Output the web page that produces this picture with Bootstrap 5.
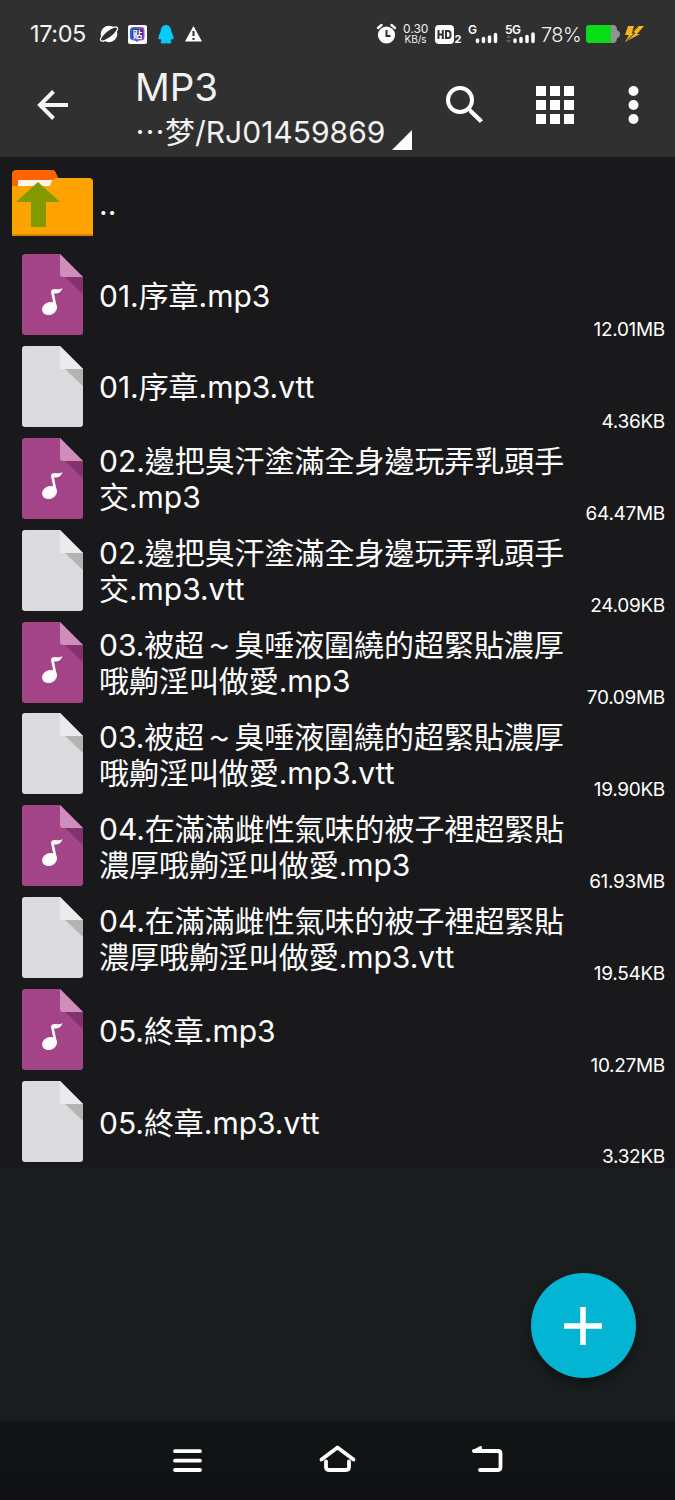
<!DOCTYPE html>
<html lang="zh-Hant">
<head>
<meta charset="utf-8">
<meta name="viewport" content="width=device-width, initial-scale=1">
<title>MP3</title>
<link href="https://cdn.jsdelivr.net/npm/bootstrap@5.3.0/dist/css/bootstrap.min.css" rel="stylesheet">
<style>
body{width:675px;height:1500px;overflow:hidden;background:#191d1e;color:#fff;font-family:Inter,"Noto Sans CJK TC",sans-serif}
svg{display:block;flex:none;overflow:visible}
.topbar{height:157px;background:#303030;color:#f2f2f2}
.statusbar{height:68px;padding-left:30px}
.clock{font-size:23.5px;line-height:24px;width:69px;white-space:nowrap;letter-spacing:-.4px}
.speed{font-size:12px;line-height:10.5px;width:25px;text-align:center;margin-left:7px;white-space:nowrap}
.pct{font-size:20px;line-height:24px;width:40px;white-space:nowrap;font-weight:300;letter-spacing:-.6px;padding-top:1px}
.toolbar{height:89px;padding-left:37px}
.heading{width:280px;margin-left:66px}
.heading-title{font-size:38.5px;line-height:38px;height:42px}
.heading-path{font-size:30px;line-height:44px;white-space:nowrap}
.files{background:#19191b;height:1011px}
.up-row{height:92px;padding-left:11px;font-size:30px}
.file-row{height:91.9px;padding:5px 10px 0 22px}
.file-name{width:480px;margin-left:16px;margin-top:2px;font-size:30px;line-height:36px;height:79px;white-space:nowrap;letter-spacing:-.04px}
.file-size{font-size:19px;line-height:22px;margin-bottom:-.5px;letter-spacing:-.3px}
.wave{display:inline-block;width:30px;text-align:center;font-size:19px;line-height:20px;vertical-align:2px;font-weight:700}
.fab{position:fixed;left:530.5px;top:1273px;width:105px;height:105px;background:#03b5d2;box-shadow:0 6px 10px rgba(0,0,0,.35)}
.navkeys{position:fixed;left:0;right:0;top:1421px;height:79px;background:linear-gradient(#101516,#111113)}
</style>
</head>
<body>
<svg width="0" height="0" class="position-absolute">
<symbol id="audio" viewBox="0 0 61 81"><path d="M3 0H38L61 23V78Q61 81 58 81H3Q0 81 0 78V3Q0 0 3 0Z" fill="#a34488"/><path d="M43 23H61V40Z" fill="#84326e"/><path d="M38 0L61 23H41Q38 23 38 20Z" fill="#cf8dbb"/><ellipse cx="27.500" cy="54.500" rx="7.700" ry="6.300" transform="rotate(-25 27.500 54.500)" fill="#fff"/><path d="M29 38Q29 35 33 35Q38 36 40.500 34Q39 40 32 39.500L35 54L32.500 55Z" fill="#fff"/></symbol>
<symbol id="plain" viewBox="0 0 61 81"><path d="M3 0H38L61 23V78Q61 81 58 81H3Q0 81 0 78V3Q0 0 3 0Z" fill="#dbdbdd"/><path d="M43 23H61V40Z" fill="#b3b3b4"/><path d="M38 0L61 23H38Z" fill="#ebebed"/></symbol>
</svg>
<header class="topbar">
  <div class="statusbar d-flex align-items-center">
    <div class="clock">17:05</div>
    <svg width="20" height="18" viewBox="0 0 20 18"><circle cx="10" cy="9" r="8.300" fill="#fff"/><ellipse cx="10" cy="9" rx="10.500" ry="3.600" transform="rotate(-38 10 9)" fill="#303030" stroke="#fff" stroke-width="1.200"/></svg>
    <svg style="margin-left:9px" width="19" height="19" viewBox="0 0 19 19"><defs><linearGradient id="pv"><stop stop-color="#2863e5"/><stop offset="1" stop-color="#b640ae"/></linearGradient></defs><rect width="19" height="19" rx="2" fill="#fff"/><path d="M6 2H13Q16.500 2 16.500 5V12Q16.500 15.500 13 15.500H11L9 17L7 15.500H5.500Q2 15 2 12V6Q2 2 6 2Z" fill="url(#pv)"/><rect x="4" y="4" width="11" height="10" rx="2" fill="#293794"/><text x="9.500" y="12.500" text-anchor="middle" font-family="Noto Sans CJK SC" font-weight="700" font-size="9.500" fill="#fff">贴</text></svg>
    <svg style="margin-left:11px" width="16" height="19" viewBox="0 0 16 19"><path d="M8 0Q13 0 13.500 7Q16 11 15.500 14Q15 14.500 13.500 14Q13 15 12.500 16Q14 17 13 18Q10 19 8 18Q6 19 3 18Q2 17 3.500 16Q3 15 2.500 14Q1 14.500.500 14Q0 11 2.500 7Q3 0 8 0Z" fill="#05cbfc"/></svg>
    <svg style="margin-left:11px" width="17" height="16" viewBox="0 0 17 16"><path d="M8.500 0L17 15.500H0Z" fill="#fff"/><path d="M8.500 5V10M8.500 12V14" stroke="#303030" stroke-width="2"/></svg>
    <svg style="margin-left:175px" width="19" height="20" viewBox="0 0 19 20"><circle cx="9.500" cy="11" r="8.600" fill="#fff"/><path d="M1 4L4.500 1M18 4L14.500 1" stroke="#fff" stroke-width="2.400" stroke-linecap="round"/><path d="M9.500 6V12H13.500" fill="none" stroke="#303030" stroke-width="2"/></svg>
    <div class="speed">0.30<br><span style="font-size:10px">KB/s</span></div>
    <svg style="margin-left:7px" width="27" height="19" viewBox="0 0 27 19"><rect width="19" height="19" rx="4" fill="#fff"/><path d="M3.500 5V14M7.800 5V14M3.500 9.500H8M11 6V13H13Q15.500 13 15.500 10.500V8.500Q15.500 6 13 6Z" stroke="#303030" stroke-width="2" fill="none"/><text x="19.500" y="18" font-family="Inter" font-size="11" font-weight="700" fill="#fff">2</text></svg>
    <svg style="margin-left:6px" width="30" height="20" viewBox="0 0 30 20"><text x="0" y="10" font-size="12" font-weight="600" fill="#fff">G</text><path d="M9.500 17.500V16M15.500 17.500V14.500M21.500 17.500V13M27.500 17.500V10.500" stroke="#fff" stroke-width="3.500" stroke-linecap="round"/></svg>
    <svg style="margin-left:7px" width="30" height="20" viewBox="0 0 30 20"><text x="0" y="10" font-size="12" font-weight="600" fill="#fff" letter-spacing="-.5">5G</text><path d="M1 14L3.500 11L6 14ZM1 16L3.500 19L6 16Z" fill="#606060"/><path d="M10 17.500V16M16 17.500V14.500M22 17.500V12.500M28 17.500V10" stroke="#fff" stroke-width="3.500" stroke-linecap="round"/></svg>
    <div class="pct" style="margin-left:6px">78%</div>
    <svg style="margin-left:5px" width="34" height="18" viewBox="0 0 34 18"><path d="M4 0H27Q31 0 31 5Q34 6 34 9Q34 12 31 13Q31 18 27 18H4Q0 18 0 14V4Q0 0 4 0Z" fill="#939393"/><path d="M4 0H25V18H4Q0 18 0 14V4Q0 0 4 0Z" fill="#08dd18"/></svg>
    <svg style="margin-left:5px" width="19" height="17" viewBox="0 0 19 17"><path d="M3 0H9L7 6L13 0H19L12 8H15L0 16L4 9H0Z" fill="#f7b51e"/><path d="M13.500 0L7 7H10L2 14.500" fill="none" stroke="#303030" stroke-width="1"/></svg>
  </div>
  <div class="toolbar d-flex">
    <svg style="margin-top:22px" width="32" height="30" viewBox="0 0 32 30"><path d="M31 15H3M16.500 1.500L3 15L16.500 28.500" fill="none" stroke="#f4f4f4" stroke-width="4"/></svg>
    <div class="heading">
      <div class="heading-title">MP3</div>
      <div class="heading-path d-flex"><span class="path-text">⋯梦/RJ01459869</span><svg style="margin:20px 0 0 7px" width="20" height="20" viewBox="0 0 20 20"><path d="M0 20L20 0V20Z" fill="#fff"/></svg></div>
    </div>
    <svg style="margin:18px 0 0 31px" width="38" height="38" viewBox="0 0 38 38"><circle cx="14" cy="14" r="12" fill="none" stroke="#fff" stroke-width="4"/><path d="M23 23L25.500 23.500L36.500 34L34 36.500L23.500 26.500Z" fill="#fff" stroke="#fff"/></svg>
    <svg style="margin:18px 0 0 52px" width="38" height="38" viewBox="0 0 38 38"><path d="M0 5H38M0 19H38M0 33H38" stroke="#fff" stroke-width="10" stroke-dasharray="10 4"/></svg>
    <svg style="margin:18px 0 0 54px" width="11" height="38" viewBox="0 0 11 38"><g fill="#fff"><circle cx="5.500" cy="5" r="5"/><circle cx="5.500" cy="19" r="5"/><circle cx="5.500" cy="33" r="5"/></g></svg>
  </div>
</header>
<main class="files">
  <div class="up-row d-flex align-items-center">
    <svg width="82" height="66" viewBox="0 0 82 66"><path d="M1 18V4Q1 0 5 0H42Q44 0 45 3L48 10V20H1Z" fill="#ff6400"/><path d="M7 10H45L39 18H7Z" fill="#fff5e6"/><path d="M1 16H39Q41 8 46 8H78Q82 8 82 12V66H1Z" fill="#ffa300"/><path d="M1 64H82V66H1Z" fill="#d98200"/><path d="M27 12L49 32H35V57H20V32H5Z" fill="#839900"/></svg>
    <span style="margin-left:6px;padding-top:2px">..</span>
  </div>
  <div class="file-row d-flex"><svg width="61" height="81"><use href="#audio"/></svg><div class="file-name d-flex align-items-center"><div>01.序章.mp3</div></div><div class="file-size ms-auto align-self-end">12.01MB</div></div>
  <div class="file-row d-flex"><svg width="61" height="81"><use href="#plain"/></svg><div class="file-name d-flex align-items-center"><div>01.序章.mp3.vtt</div></div><div class="file-size ms-auto align-self-end">4.36KB</div></div>
  <div class="file-row d-flex"><svg width="61" height="81"><use href="#audio"/></svg><div class="file-name d-flex align-items-center"><div>02.邊把臭汗塗滿全身邊玩弄乳頭手<br>交.mp3</div></div><div class="file-size ms-auto align-self-end">64.47MB</div></div>
  <div class="file-row d-flex"><svg width="61" height="81"><use href="#plain"/></svg><div class="file-name d-flex align-items-center"><div>02.邊把臭汗塗滿全身邊玩弄乳頭手<br>交.mp3.vtt</div></div><div class="file-size ms-auto align-self-end">24.09KB</div></div>
  <div class="file-row d-flex"><svg width="61" height="81"><use href="#audio"/></svg><div class="file-name d-flex align-items-center"><div>03.被超<span class="wave">～</span>臭唾液圍繞的超緊貼濃厚<br>哦齁淫叫做愛.mp3</div></div><div class="file-size ms-auto align-self-end">70.09MB</div></div>
  <div class="file-row d-flex"><svg width="61" height="81"><use href="#plain"/></svg><div class="file-name d-flex align-items-center"><div>03.被超<span class="wave">～</span>臭唾液圍繞的超緊貼濃厚<br>哦齁淫叫做愛.mp3.vtt</div></div><div class="file-size ms-auto align-self-end">19.90KB</div></div>
  <div class="file-row d-flex"><svg width="61" height="81"><use href="#audio"/></svg><div class="file-name d-flex align-items-center"><div>04.在滿滿雌性氣味的被子裡超緊貼<br>濃厚哦齁淫叫做愛.mp3</div></div><div class="file-size ms-auto align-self-end">61.93MB</div></div>
  <div class="file-row d-flex"><svg width="61" height="81"><use href="#plain"/></svg><div class="file-name d-flex align-items-center"><div>04.在滿滿雌性氣味的被子裡超緊貼<br>濃厚哦齁淫叫做愛.mp3.vtt</div></div><div class="file-size ms-auto align-self-end">19.54KB</div></div>
  <div class="file-row d-flex"><svg width="61" height="81"><use href="#audio"/></svg><div class="file-name d-flex align-items-center"><div>05.終章.mp3</div></div><div class="file-size ms-auto align-self-end">10.27MB</div></div>
  <div class="file-row d-flex"><svg width="61" height="81"><use href="#plain"/></svg><div class="file-name d-flex align-items-center"><div>05.終章.mp3.vtt</div></div><div class="file-size ms-auto align-self-end">3.32KB</div></div>
</main>
<button class="fab btn border-0 rounded-circle p-0 d-flex align-items-center justify-content-center" aria-label="+"><svg width="38" height="38" viewBox="0 0 38 38"><path d="M19 0V38M0 19H38" stroke="#fff" stroke-width="5.500"/></svg></button>
<nav class="navkeys d-flex">
  <svg style="margin:28px 0 0 173px" width="29" height="23" viewBox="0 0 29 23"><path d="M2 2.200H27M2 11.700H27M2 21H27" stroke="#fff" stroke-width="3.800" stroke-linecap="round"/></svg>
  <svg style="margin:24px 0 0 117px" width="37" height="27" viewBox="0 0 37 27"><path d="M2.500 14.500L18.500 2.500L34.500 14.500M7 16.500V22Q7 25 10 25H27Q30 25 30 22V16.500" fill="none" stroke="#fff" stroke-width="3.800" stroke-linecap="round" stroke-linejoin="round"/></svg>
  <svg style="margin:24px 0 0 116px" width="31" height="27" viewBox="0 0 31 27"><path d="M2 6H26Q28.500 6 28.500 8.500V22Q28.500 25 26 25H8" fill="none" stroke="#fff" stroke-width="3.800" stroke-linecap="round"/><path d="M2 6L8.500 2.500V6Z" fill="#fff" stroke="#fff" stroke-width="3" stroke-linejoin="round"/></svg>
</nav>
<script src="https://cdn.jsdelivr.net/npm/bootstrap@5.3.0/dist/js/bootstrap.bundle.min.js"></script>
</body>
</html>
